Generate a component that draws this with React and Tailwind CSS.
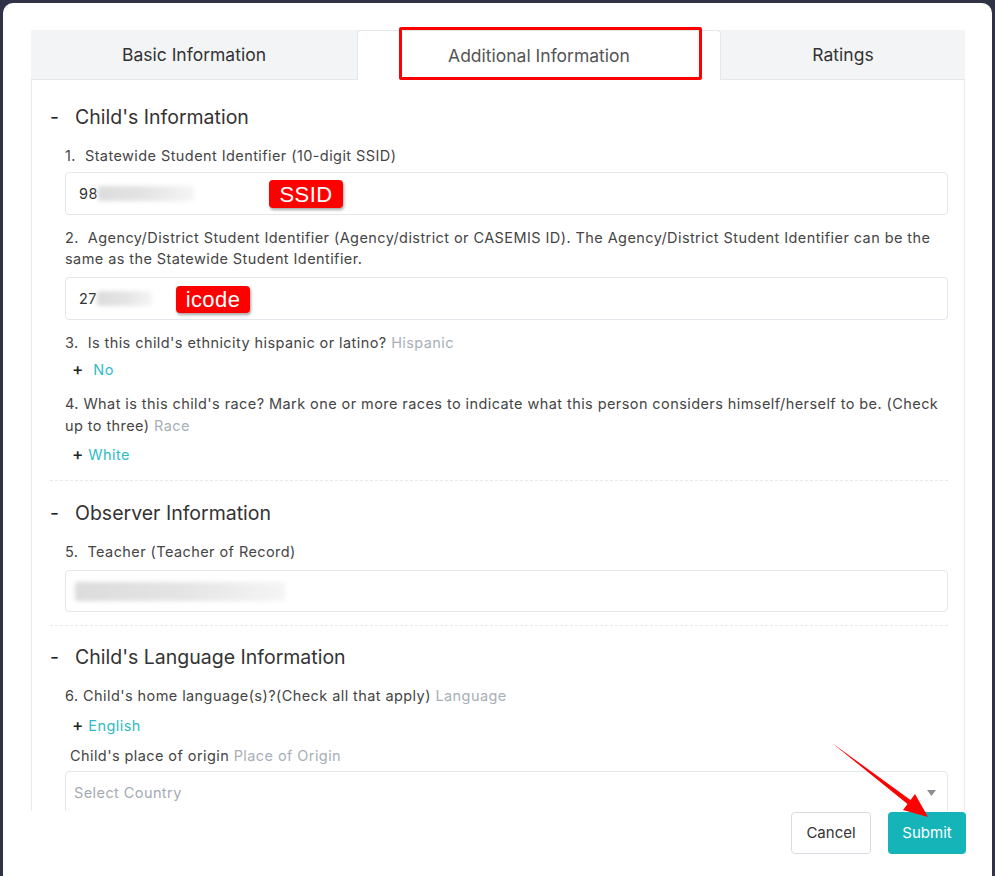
import React from "react";

const font = { fontFamily: "Inter, 'Noto Sans', 'Liberation Sans', sans-serif" };
const annoFont = { fontFamily: "'Liberation Sans', Arial, sans-serif" };

function SectionHeading({ children, className = "" }) {
  return (
    <div className={`flex items-center text-[19.5px] leading-[28px] text-[#333] ${className}`}>
      <span className="w-[25px] text-[#222]">-</span>
      <span>{children}</span>
    </div>
  );
}

function Question({ children, className = "", leading = "leading-[21px]" }) {
  return (
    <div className={`text-[14.5px] tracking-[0.42px] ${leading} text-[#454545] ${className}`}>{children}</div>
  );
}

function Muted({ children }) {
  return <span className="text-[#a7afb8]">{children}</span>;
}

function Choice({ children, className = "", gap = "ml-[5px]" }) {
  return (
    <div className={`flex items-center pl-[7px] text-[14.5px] leading-[21px] tracking-[0.42px] ${className}`}>
      <span className="text-[17px] font-medium leading-[21px] tracking-normal text-[#222]">+</span>
      <span className={`${gap} text-[#2fbcc4]`}>{children}</span>
    </div>
  );
}

function Redacted({ className = "" }) {
  return (
    <span
      className={`inline-block rounded-[2px] bg-gradient-to-r from-[#dcdcdc] via-[#e4e4e4] to-[#f5f5f5] blur-[2px] ${className}`}
    />
  );
}

function Tag({ children, className = "" }) {
  return (
    <span
      style={annoFont}
      className={`absolute flex items-center justify-center rounded-[4px] bg-[#ff0000] text-[22px] text-white shadow-[1px_2px_3px_rgba(0,0,0,0.35)] ${className}`}
    >
      {children}
    </span>
  );
}

export default function App() {
  return (
    <div style={font} className="relative h-[876px] w-[995px] overflow-hidden bg-[#2f3345]">
      <div className="ml-[3px] mt-[3px] h-[873px] w-[989px] overflow-hidden rounded-t-[10px] bg-white pl-[28px] pr-[27px] pt-[27px]">
        {/* tab strip */}
        <div className="relative flex h-[50px] border-b border-[#e4e7eb] bg-[#f3f4f6]">
          <div className="flex w-[326px] items-center justify-center pt-[2px] text-[17.5px] text-[#333]">
            Basic Information
          </div>
          <div className="-mb-px flex w-[364px] items-center justify-center rounded-t-[4px] border border-b-0 border-[#e4e7eb] bg-white pt-[2px] text-[17.5px] text-[#555]">
            Additional Information
          </div>
          <div className="flex w-[244px] items-center justify-center pt-[2px] text-[17.5px] text-[#333]">Ratings</div>
          <div className="pointer-events-none absolute left-[368px] top-[-3px] h-[53px] w-[303px] rounded-[2px] border-[3px] border-[#ff0000]" />
        </div>

        {/* tab panel */}
        <div className="h-[731px] overflow-hidden border-x border-[#e8eaed] pl-[18px] pr-[16px] pt-[23px]">
          <SectionHeading>Child's Information</SectionHeading>
          <div className="pl-[15px]">
            <Question className="mt-[14px]">1.&nbsp;&nbsp;Statewide Student Identifier (10-digit SSID)</Question>
            <div className="relative mt-[6px] flex h-[43px] items-center rounded-[4px] border border-[#e3e6ea] pl-[13px] text-[14.5px] tracking-[0.42px] text-[#333]">
              <span>98</span>
              <Redacted className="h-[15px] w-[96px]" />
              <Tag className="left-[203px] top-[7px] h-[28px] w-[74px]">SSID</Tag>
            </div>

            <Question className="mt-[12px]">
              2.&nbsp;&nbsp;Agency/District Student Identifier (Agency/district or CASEMIS ID). The Agency/District Student Identifier can be the same as the Statewide Student Identifier.
            </Question>
            <div className="relative mt-[8px] flex h-[43px] items-center rounded-[4px] border border-[#e3e6ea] pl-[13px] text-[14.5px] tracking-[0.42px] text-[#333]">
              <span>27</span>
              <Redacted className="h-[15px] w-[55px]" />
              <Tag className="left-[110px] top-[8px] h-[27px] w-[74px]">icode</Tag>
            </div>

            <Question className="mt-[12px]">
              3.&nbsp;&nbsp;Is this child's ethnicity hispanic or latino? <Muted>Hispanic</Muted>
            </Question>
            <Choice className="mt-[6px]" gap="ml-[10px]">No</Choice>

            <Question className="mt-[13px]" leading="leading-[22px]">
              4. What is this child's race? Mark one or more races to indicate what this person considers himself/herself to be. (Check up to three) <Muted>Race</Muted>
            </Question>
            <Choice className="mt-[7px]">White</Choice>
          </div>

          <div className="mt-[15px] border-t border-dashed border-[#e6e8eb]" />

          <SectionHeading className="mt-[18px]">Observer Information</SectionHeading>
          <div className="pl-[15px]">
            <Question className="mt-[14px]">5.&nbsp;&nbsp;Teacher (Teacher of Record)</Question>
            <div className="mt-[8px] flex h-[42px] items-center rounded-[4px] border border-[#e3e6ea] pl-[9px]">
              <Redacted className="h-[19px] w-[210px]" />
            </div>
          </div>

          <div className="mt-[13px] border-t border-dashed border-[#e6e8eb]" />

          <SectionHeading className="mt-[17px]">Child's Language Information</SectionHeading>
          <div className="pl-[15px]">
            <Question className="mt-[14px]">
              6. Child's home language(s)?(Check all that apply) <Muted>Language</Muted>
            </Question>
            <Choice className="mt-[9px]">English</Choice>
            <Question className="mt-[9px] pl-[5px]">
              Child's place of origin <Muted>Place of Origin</Muted>
            </Question>
            <div className="mt-[5px] flex h-[43px] items-center justify-between rounded-[4px] border border-[#e3e6ea] pl-[8px] pr-[11px] text-[14.5px] tracking-[0.42px] text-[#a4abb3]">
              <span>Select Country</span>
              <svg width="9" height="6" viewBox="0 0 9 6">
                <path d="M0 0 H9 L4.5 6 Z" fill="#8a8f96" />
              </svg>
            </div>
          </div>
        </div>

        {/* dialog actions */}
        <div className="-mr-px mt-[1px] flex justify-end gap-[17px]">
          <button className="h-[42px] w-[80px] rounded-[4px] border border-[#d8dce2] bg-white text-[15px] text-[#333]">
            Cancel
          </button>
          <button className="h-[42px] w-[78px] rounded-[4px] bg-[#14b4b9] text-[15px] text-white">Submit</button>
        </div>
      </div>

      {/* pointer arrow toward submit */}
      <svg className="pointer-events-none absolute left-0 top-0" width="995" height="876" viewBox="0 0 995 876">
        <polygon points="832,743 910.5,800 915,794 928,817 903,810 907.5,804" fill="#ff0000" />
      </svg>
    </div>
  );
}
